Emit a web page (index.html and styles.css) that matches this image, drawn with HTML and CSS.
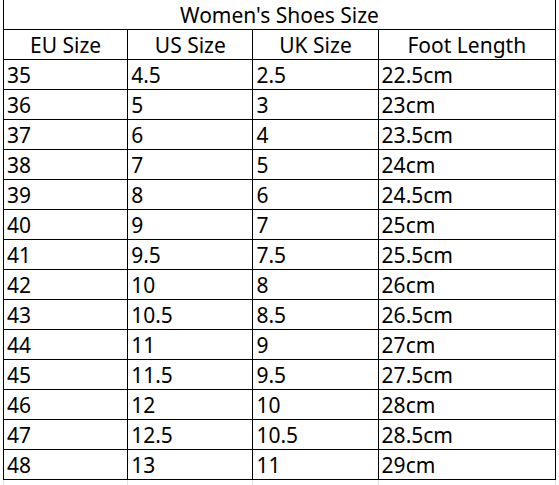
FILE: index.html
```html
<!DOCTYPE html>
<html>
<head>
<meta charset="utf-8">
<link rel="stylesheet" href="styles.css">
</head>
<body>
<table class="size-table">
  <colgroup>
    <col class="c1"><col class="c2"><col class="c3"><col class="c4">
  </colgroup>
  <tr class="title-row"><td colspan="4" class="title">Women's Shoes Size</td></tr>
  <tr class="head-row">
    <td class="head">EU Size</td><td class="head">US Size</td><td class="head">UK Size</td><td class="head">Foot Length</td>
  </tr>
  <tr><td>35</td><td>4.5</td><td>2.5</td><td>22.5cm</td></tr>
  <tr><td>36</td><td>5</td><td>3</td><td>23cm</td></tr>
  <tr><td>37</td><td>6</td><td>4</td><td>23.5cm</td></tr>
  <tr><td>38</td><td>7</td><td>5</td><td>24cm</td></tr>
  <tr><td>39</td><td>8</td><td>6</td><td>24.5cm</td></tr>
  <tr><td>40</td><td>9</td><td>7</td><td>25cm</td></tr>
  <tr><td>41</td><td>9.5</td><td>7.5</td><td>25.5cm</td></tr>
  <tr><td>42</td><td>10</td><td>8</td><td>26cm</td></tr>
  <tr><td>43</td><td>10.5</td><td>8.5</td><td>26.5cm</td></tr>
  <tr><td>44</td><td>11</td><td>9</td><td>27cm</td></tr>
  <tr><td>45</td><td>11.5</td><td>9.5</td><td>27.5cm</td></tr>
  <tr><td>46</td><td>12</td><td>10</td><td>28cm</td></tr>
  <tr><td>47</td><td>12.5</td><td>10.5</td><td>28.5cm</td></tr>
  <tr><td>48</td><td>13</td><td>11</td><td>29cm</td></tr>
  <tr class="grid-row"><td></td><td></td><td></td><td></td></tr>
</table>
</body>
</html>
```
FILE: styles.css
```css
html, body {
  margin: 0;
  padding: 0;
  background: #ffffff;
}
.size-table {
  margin-left: 3px;
  border-collapse: separate;
  border-spacing: 0;
  table-layout: fixed;
  width: 553px;
  font-family: "Noto Sans", "Noto Sans CJK SC", sans-serif;
  font-size: 21px;
  color: #000;
}
.c1, .c2, .c3 { width: 125px; }
.c4 { width: 177px; }
.size-table td {
  box-sizing: border-box;
  height: 30px;
  padding: 1px 0 0 3px;
  border-right: 1px solid #000;
  border-bottom: 1px solid #000;
  line-height: 28px;
  vertical-align: middle;
  white-space: nowrap;
  overflow: hidden;
}
.size-table tr td:first-child {
  border-left: 1px solid #000;
}
.size-table td.title {
  height: 30px;
  text-align: center;
  padding: 0;
}
.size-table td.head {
  text-align: center;
  padding: 1px 0 0 0;
}
.size-table .grid-row td {
  height: 6px;
  line-height: 6px;
  padding: 0;
  border-bottom: none;
  border-right: 1px solid #e2e2e2;
}
.size-table .grid-row td:first-child {
  border-left: 1px solid #e2e2e2;
}
```
